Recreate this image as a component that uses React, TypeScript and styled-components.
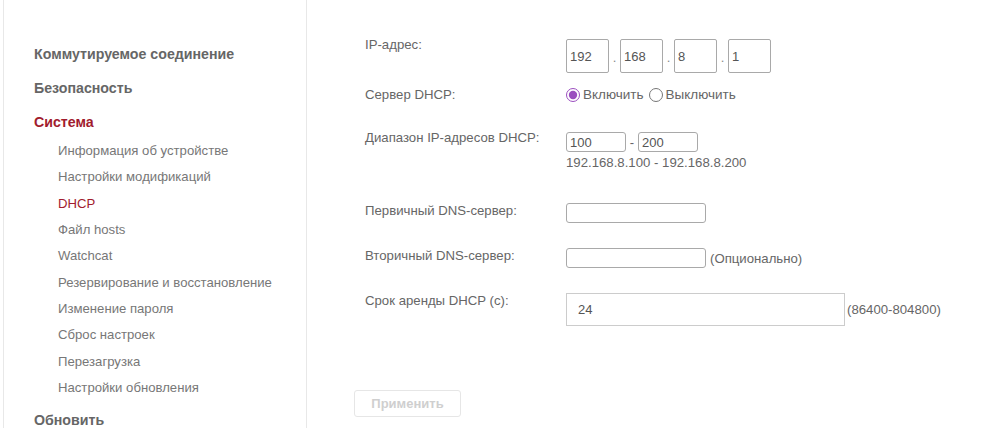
import React from "react";
import styled, { createGlobalStyle } from "styled-components";

const GlobalStyle = createGlobalStyle`
  html, body {
    margin: 0;
    padding: 0;
    background: #ffffff;
  }
  body {
    font-family: "Liberation Sans", Arial, sans-serif;
    color: #666666;
  }
  * {
    box-sizing: border-box;
  }
`;

const subItems = [
  "Информация об устройстве",
  "Настройки модификаций",
  "DHCP",
  "Файл hosts",
  "Watchcat",
  "Резервирование и восстановление",
  "Изменение пароля",
  "Сброс настроек",
  "Перезагрузка",
  "Настройки обновления",
];

export default function App() {
  return (
    <>
      <GlobalStyle />
      <Page>
        <Sidebar>
          <MenuHeading>Коммутируемое соединение</MenuHeading>
          <MenuHeading>Безопасность</MenuHeading>
          <MenuHeading $active>Система</MenuHeading>
          <SubMenu>
            {subItems.map((item) => (
              <SubItem key={item} $active={item === "DHCP"}>
                {item}
              </SubItem>
            ))}
          </SubMenu>
          <MenuHeading $gap={2}>Обновить</MenuHeading>
        </Sidebar>

        <Main>
          <FormRow $top={37}>
            <Label>IP-адрес:</Label>
            <IpGroup>
              <IpBox defaultValue="192" />
              <Dot>.</Dot>
              <IpBox defaultValue="168" />
              <Dot>.</Dot>
              <IpBox defaultValue="8" />
              <Dot>.</Dot>
              <IpBox defaultValue="1" />
            </IpGroup>
          </FormRow>

          <FormRow $top={14}>
            <Label>Сервер DHCP:</Label>
            <RadioGroup>
              <RadioLabel>
                <Radio type="radio" name="dhcp" defaultChecked />
                Включить
              </RadioLabel>
              <RadioLabel>
                <Radio type="radio" name="dhcp" />
                Выключить
              </RadioLabel>
            </RadioGroup>
          </FormRow>

          <FormRow $top={27}>
            <Label>Диапазон IP-адресов DHCP:</Label>
            <Field>
              <RangeLine>
                <SmallBox $width={60} defaultValue="100" />
                <Dash>-</Dash>
                <SmallBox $width={60} defaultValue="200" />
              </RangeLine>
              <Hint>192.168.8.100 - 192.168.8.200</Hint>
            </Field>
          </FormRow>

          <FormRow $top={32}>
            <Label>Первичный DNS-сервер:</Label>
            <Field>
              <SmallBox $width={140} />
            </Field>
          </FormRow>

          <FormRow $top={25}>
            <Label>Вторичный DNS-сервер:</Label>
            <Field>
              <InlineLine>
                <SmallBox $width={140} />
                <Note>(Опционально)</Note>
              </InlineLine>
            </Field>
          </FormRow>

          <FormRow $top={25}>
            <Label>Срок аренды DHCP (с):</Label>
            <Field>
              <InlineLine>
                <LeaseBox defaultValue="24" />
                <Note $gap={2}>(86400-804800)</Note>
              </InlineLine>
            </Field>
          </FormRow>

          <ApplyButton disabled>Применить</ApplyButton>
        </Main>
      </Page>
    </>
  );
}

const Page = styled.div`
  display: flex;
  height: 428px;
  overflow: hidden;
`;

const Sidebar = styled.nav`
  width: 304px;
  margin-left: 3px;
  flex-shrink: 0;
  border-left: 1px solid #e8e8e8;
  border-right: 1px solid #e8e8e8;
  padding: 37px 0 0 30px;
  display: flex;
  flex-direction: column;
`;

const MenuHeading = styled.div<{ $active?: boolean; $gap?: number }>`
  font-size: 14.2px;
  font-weight: 700;
  line-height: 34px;
  margin-top: ${(p) => p.$gap ?? 0}px;
  color: ${(p) => (p.$active ? "#a11c2e" : "#666666")};
`;

const SubMenu = styled.div`
  margin-top: -1px;
  padding-left: 24px;
  display: flex;
  flex-direction: column;
`;

const SubItem = styled.div<{ $active?: boolean }>`
  font-size: 13.15px;
  line-height: 26.33px;
  color: ${(p) => (p.$active ? "#a11c2e" : "#777777")};
`;

const Main = styled.main`
  flex: 1;
  padding-left: 47px;
  display: flex;
  flex-direction: column;
  align-items: flex-start;
`;

const FormRow = styled.div<{ $top: number }>`
  display: grid;
  grid-template-columns: 201px auto;
  align-items: start;
  margin-top: ${(p) => p.$top}px;
  padding-left: 11px;
`;

const Label = styled.div`
  font-size: 13.2px;
  line-height: 16px;
  color: #666666;
`;

const IpGroup = styled.div`
  display: flex;
  align-items: flex-end;
  margin-top: 2px;
`;

const IpBox = styled.input`
  width: 43px;
  height: 34px;
  border: 1px solid #a9a9a9;
  border-radius: 2px;
  padding: 0 3px;
  font-family: inherit;
  font-size: 13px;
  color: #555555;
  background: #ffffff;
  outline: none;
`;

const Dot = styled.span`
  width: 11px;
  margin-bottom: 8px;
  text-align: center;
  font-size: 13px;
  line-height: 14px;
  color: #888888;
`;

const RadioGroup = styled.div`
  display: flex;
  align-items: center;
  gap: 5px;
  font-size: 13.5px;
  line-height: 16px;
  color: #666666;
`;

const RadioLabel = styled.label`
  display: flex;
  align-items: center;
`;

const Radio = styled.input`
  width: 14px;
  height: 14px;
  margin: 0 3px 0 0;
  accent-color: #9b4fbf;
`;

const Field = styled.div`
  display: flex;
  flex-direction: column;
`;

const RangeLine = styled.div`
  display: flex;
  align-items: center;
  margin-top: 2px;
`;

const InlineLine = styled.div`
  display: flex;
  align-items: center;
`;

const SmallBox = styled.input<{ $width: number }>`
  width: ${(p) => p.$width}px;
  height: 20px;
  border: 1px solid #a9a9a9;
  border-radius: 3px;
  padding: 0 3px;
  font-family: inherit;
  font-size: 13px;
  color: #555555;
  background: #ffffff;
  outline: none;
`;

const Dash = styled.span`
  width: 12px;
  text-align: center;
  font-size: 13px;
  color: #666666;
`;

const Hint = styled.div`
  margin-top: 3px;
  font-size: 13.2px;
  line-height: 16px;
  color: #666666;
`;

const Note = styled.span<{ $gap?: number }>`
  margin-left: ${(p) => p.$gap ?? 4}px;
  font-size: 13.2px;
  color: #666666;
`;

const LeaseBox = styled.input`
  width: 279px;
  height: 33px;
  border: 1px solid #cccccc;
  border-radius: 0;
  padding: 0 11px;
  font-family: inherit;
  font-size: 13px;
  color: #555555;
  background: #ffffff;
  outline: none;
`;

const ApplyButton = styled.button`
  margin-top: 64px;
  width: 107px;
  height: 27px;
  border: 1px solid #e6e6e6;
  border-radius: 3px;
  background: #ffffff;
  font-family: inherit;
  font-size: 13px;
  font-weight: 700;
  color: #cfcfcf;
`;
